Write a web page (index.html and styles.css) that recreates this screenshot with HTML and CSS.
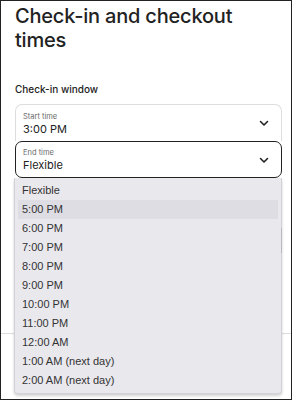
FILE: index.html
```html
<!DOCTYPE html>
<html>
  <head>
    <meta charset="utf-8">
    <meta name="viewport" content="width=device-width, initial-scale=1">
    <title>Check-in and checkout times</title>
    <link rel="stylesheet" href="styles.css">
  </head>
  <body>
    <div id="frame">
      <h1 class="title">Check-in and checkout times</h1>
      <h3 class="section_label">Check-in window</h3>
      <div class="select_group">
        <div class="select_box start_box">
          <div class="select_text">
            <span class="select_label">Start time</span>
            <span class="select_value">3:00 PM</span>
          </div>
          <svg class="chevron" width="10" height="10" viewBox="0 0 10 10"><path d="M1.5 3.5 L5 7 L8.5 3.5" fill="none" stroke="#222" stroke-width="1.6" stroke-linecap="round" stroke-linejoin="round"/></svg>
        </div>
        <div class="select_box end_box">
          <div class="select_text">
            <span class="select_label">End time</span>
            <span class="select_value">Flexible</span>
          </div>
          <svg class="chevron" width="10" height="10" viewBox="0 0 10 10"><path d="M1.5 3.5 L5 7 L8.5 3.5" fill="none" stroke="#222" stroke-width="1.6" stroke-linecap="round" stroke-linejoin="round"/></svg>
        </div>
        <ul class="dropdown">
          <li class="option">Flexible</li>
          <li class="option active">5:00 PM</li>
          <li class="option">6:00 PM</li>
          <li class="option">7:00 PM</li>
          <li class="option">8:00 PM</li>
          <li class="option">9:00 PM</li>
          <li class="option">10:00 PM</li>
          <li class="option">11:00 PM</li>
          <li class="option">12:00 AM</li>
          <li class="option">1:00 AM (next day)</li>
          <li class="option">2:00 AM (next day)</li>
          <span class="scroll_thumb"></span>
        </ul>
      </div>
      <div class="footer"></div>
    </div>
  </body>
</html>
```

FILE: styles.css
```css
body {
  margin: 0;
  font-family: Inter, "Noto Sans", sans-serif;
  color: #222;
  background: #fff;
}

#frame {
  width: 292px;
  height: 400px;
  box-sizing: border-box;
  border: 1px solid #222;
  padding: 0 9px 0 14px;
  overflow: hidden;
}

.title {
  margin: 3px 0 0 0;
  font-size: 20px;
  line-height: 24px;
  font-weight: 500;
  letter-spacing: -0.2px;
}

.section_label {
  margin: 30px 0 0 0;
  font-size: 10px;
  line-height: 14px;
  font-weight: 500;
}

.select_group {
  position: relative;
  margin-top: 8px;
}

.select_box {
  height: 37px;
  box-sizing: border-box;
  display: flex;
  align-items: center;
  justify-content: space-between;
  padding: 0 12px 0 7px;
}

.start_box {
  border: 1px solid #ddd;
  border-bottom: none;
  border-radius: 7px 7px 0 0;
}

.end_box {
  border: 1px solid #222;
  border-radius: 7px;
}

.select_text {
  display: flex;
  flex-direction: column;
  padding-top: 1px;
}

.select_label {
  font-size: 7.5px;
  line-height: 10px;
  color: #6a6a6a;
}

.select_value {
  font-size: 11px;
  line-height: 14px;
}

.chevron {
  display: block;
}

.dropdown {
  position: absolute;
  top: 74px;
  left: -1px;
  width: 268px;
  box-sizing: border-box;
  margin: 0;
  padding: 3px 3px 3px 3px;
  list-style: none;
  background: #e9e8ed;
  border: 1px solid #d2d1d6;
  border-top: none;
  border-radius: 0 0 4px 4px;
  box-shadow: 0 2px 3px rgba(0, 0, 0, 0.18);
  font-family: "Liberation Sans", Arial, sans-serif;
  font-size: 11px;
  color: #333;
}

.option {
  height: 19px;
  line-height: 19px;
  padding-left: 4px;
}

.option.active {
  background: #dedde3;
}

.scroll_thumb {
  position: absolute;
  right: -1px;
  top: 50px;
  width: 1px;
  height: 25px;
  background: #b9b9bd;
}

.footer {
  margin: 155px -9px 0 -14px;
  border-top: 1px solid #ddd;
}
```
